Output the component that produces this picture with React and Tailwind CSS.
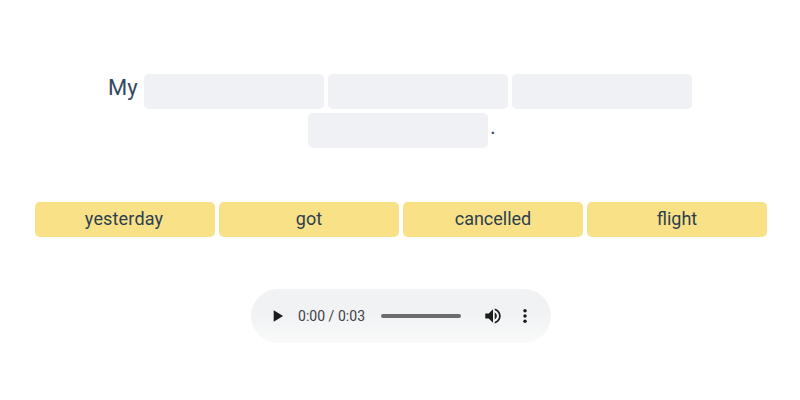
const words = [
  { text: 'yesterday', spacing: 'pr-[2px] tracking-[0.12px]' },
  { text: 'got', spacing: 'tracking-normal' },
  { text: 'cancelled', spacing: 'tracking-normal' },
  { text: 'flight', spacing: 'tracking-normal' },
];

function Blank() {
  return <span className="h-[35px] w-[180px] shrink-0 rounded-[5px] bg-[#f0f1f5]" />;
}

function AudioPlayer() {
  return (
    <div className="ml-0.5 mt-[52px] flex h-[54px] w-[300px] items-center rounded-full bg-linear-to-b from-[#f1f2f4] from-45% to-[#f9faf9] pl-[15px]">
      <button aria-label="Play" className="h-6 w-6">
        <svg viewBox="0 0 24 24" className="h-6 w-6" fill="#1c1c1c">
          <path d="M7.7 6.3v11.4L17.1 12z" />
        </svg>
      </button>
      <span className="ml-2 w-[83px] whitespace-nowrap text-[14px] leading-5 tracking-[0.03px] text-[#3f4042]">0:00 / 0:03</span>
      <span className="h-1 w-20 rounded-full bg-[#6c6c6f]" />
      <button aria-label="Mute" className="ml-[23px] h-[18px] w-[18px]">
        <svg viewBox="1.5 1.5 21 21" className="h-[18px] w-[18px]" fill="#1c1c1c">
          <path d="M3 9v6h4l5 5V4L7 9H3zm13.5 3c0-1.77-1.02-3.29-2.5-4.03v8.05c1.48-.73 2.5-2.25 2.5-4.02zM14 3.23v2.06c2.89.86 5 3.54 5 6.71s-2.11 5.85-5 6.71v2.06c4.01-.91 7-4.49 7-8.77s-2.99-7.86-7-8.77z" />
        </svg>
      </button>
      <button aria-label="More options" className="ml-[11px] h-6 w-6">
        <svg viewBox="0 0 24 24" className="h-6 w-6" fill="#1c1c1c">
          <circle cx="12" cy="6.8" r="1.75" />
          <circle cx="12" cy="12" r="1.75" />
          <circle cx="12" cy="17.2" r="1.75" />
        </svg>
      </button>
    </div>
  );
}

export default function App() {
  return (
    <div className="flex h-[400px] w-[800px] flex-col items-center bg-white font-['Roboto',sans-serif] text-[#34495e]">
      <div className="mt-[74px] flex h-[35px] w-[584px] gap-1">
        <span className="w-8 text-[22px] leading-[27px]">My</span>
        <Blank />
        <Blank />
        <Blank />
      </div>
      <div className="mt-1 flex h-[35px] w-[184px] gap-0.5">
        <Blank />
        <span className="text-[22px] leading-[27px]">.</span>
      </div>
      <div className="ml-0.5 mt-[54px] flex gap-1">
        {words.map(({ text, spacing }) => (
          <button
            key={text}
            className={`h-[35px] w-[180px] rounded-[5px] bg-[#f9e187] pb-0.5 text-[18px] leading-[33px] text-[#2c3e50] [font-kerning:none] ${spacing}`}
          >
            {text}
          </button>
        ))}
      </div>
      <AudioPlayer />
    </div>
  );
}
